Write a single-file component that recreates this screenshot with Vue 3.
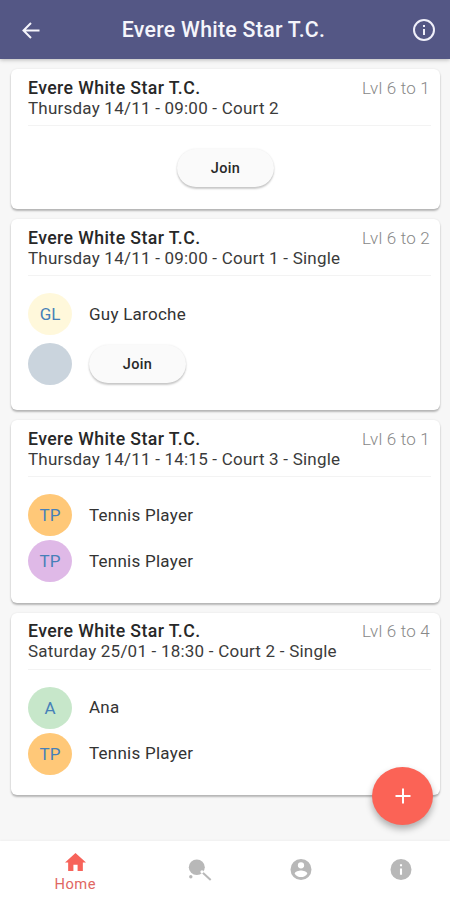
<script setup>
const club = 'Evere White Star T.C.'
const matches = [
  { when: 'Thursday 14/11 - 09:00 - Court 2', level: 'Lvl 6 to 1', size: 'short', players: [] },
  {
    when: 'Thursday 14/11 - 09:00 - Court 1 - Single', level: 'Lvl 6 to 2', size: 'tall',
    players: [{ initials: 'GL', name: 'Guy Laroche', tone: 'cream' }, { tone: 'empty' }]
  },
  {
    when: 'Thursday 14/11 - 14:15 - Court 3 - Single', level: 'Lvl 6 to 1', size: 'medium',
    players: [{ initials: 'TP', name: 'Tennis Player', tone: 'orange' }, { initials: 'TP', name: 'Tennis Player', tone: 'purple' }]
  },
  {
    when: 'Saturday 25/01 - 18:30 - Court 2 - Single', level: 'Lvl 6 to 4', size: 'medium',
    players: [{ initials: 'A', name: 'Ana', tone: 'green' }, { initials: 'TP', name: 'Tennis Player', tone: 'orange' }]
  }
]
</script>

<template>
  <div class="screen">
    <header class="bar">
      <svg class="back" viewBox="0 0 18 17"><path d="M17.5 8.5H1.5M9 1L1.5 8.5L9 16" /></svg>
      <h1>{{ club }}</h1>
      <svg class="about" viewBox="0 0 24 24"><path d="M11 7h2v2h-2zm0 4h2v6h-2zm1-10a11 11 0 1 0 0 22 11 11 0 0 0 0-22zm0 20a9 9 0 1 1 0-18 9 9 0 0 1 0 18z" /></svg>
    </header>

    <main class="list">
      <article v-for="(m, i) in matches" :key="i" class="card" :class="m.size">
        <div class="head">
          <div class="titles">
            <h2>{{ club }}</h2>
            <p class="when">{{ m.when }}</p>
          </div>
          <span class="level">{{ m.level }}</span>
        </div>
        <div v-if="m.players.length" class="players">
          <div v-for="(p, j) in m.players" :key="j" class="player" :class="{ open: !p.name }">
            <span class="avatar" :class="p.tone">{{ p.initials }}</span>
            <span v-if="p.name" class="name">{{ p.name }}</span>
            <button v-else class="join">Join</button>
          </div>
        </div>
        <div v-else class="vacant"><button class="join">Join</button></div>
      </article>
    </main>

    <button class="fab" aria-label="Add">
      <svg viewBox="0 0 16 16"><path d="M8 0.5V15.5M0.5 8H15.5" /></svg>
    </button>

    <nav class="tabs">
      <a class="tab active">
        <svg class="home" viewBox="2 3 20 17" preserveAspectRatio="none"><path d="M10 20v-6h4v6h5v-8h3L12 3 2 12h3v8z" /></svg>
        <span>Home</span>
      </a>
      <a class="tab">
        <svg class="racket" viewBox="0 0 24 23">
          <ellipse cx="8.8" cy="8.3" rx="8" ry="7.7" />
          <path class="handle" d="M14 13L22.7 21" />
          <circle class="gap" cx="14" cy="12.8" r="1.6" />
          <circle cx="2.8" cy="17.8" r="1.7" />
        </svg>
      </a>
      <a class="tab">
        <svg class="round" viewBox="2 2 20 20"><path d="M12 2a10 10 0 1 0 0 20 10 10 0 0 0 0-20zm0 3a3 3 0 1 1 0 6 3 3 0 0 1 0-6zm0 14.2a7.2 7.2 0 0 1-6-3.22c.03-1.99 4-3.08 6-3.08s5.97 1.09 6 3.08a7.2 7.2 0 0 1-6 3.22z" /></svg>
      </a>
      <a class="tab">
        <svg class="round" viewBox="2 2 20 20"><path d="M12 2a10 10 0 1 0 0 20 10 10 0 0 0 0-20zm1 15h-2v-6h2zm0-8h-2V7h2z" /></svg>
      </a>
    </nav>
  </div>
</template>

<style>
body { margin: 0; }
</style>

<style scoped>
* { box-sizing: border-box; }
.screen {
  position: relative;
  display: flex;
  flex-direction: column;
  width: 450px;
  height: 900px;
  overflow: hidden;
  background: #f7f7f7;
  font-family: Roboto, sans-serif;
  color: #282828;
}
.bar {
  display: flex;
  align-items: center;
  justify-content: space-between;
  flex: none;
  height: 59px;
  padding: 1px 14px 0 22px;
  background: #545785;
  box-shadow: 0 1px 4px rgba(0, 0, 0, 0.25);
}
.back { width: 18px; height: 17px; fill: none; stroke: #f5f5fb; stroke-width: 2; }
.about { width: 24px; height: 24px; margin-left: 5px; fill: #f0f0fa; }
h1 { margin: 0; font-size: 21.3px; font-weight: 500; line-height: 24px; letter-spacing: 0.28px; color: #f5f5fb; white-space: nowrap; }
.list { display: flex; flex-direction: column; gap: 10px; flex: 1; padding: 10px 10px 0 11px; }
.card {
  display: flex;
  flex-direction: column;
  flex: none;
  padding: 0 9px 0 17px;
  border-radius: 6px;
  background: #fff;
  box-shadow: 0 2px 2px rgba(0, 0, 0, 0.25), 0 0 2px rgba(0, 0, 0, 0.09);
}
.short { height: 140px; }
.tall { height: 191px; }
.medium { height: 182.5px; }
.head {
  display: flex;
  justify-content: space-between;
  flex: none;
  height: 57px;
  padding-top: 8.5px;
  padding-right: 1px;
  border-bottom: 1px solid #f3f3f3;
}
h2, .when { margin: 0; line-height: 20px; white-space: nowrap; }
h2 { font-size: 17.7px; font-weight: 500; letter-spacing: 0.4px; }
.when { font-size: 17px; letter-spacing: 0.22px; color: #3b3b3b; }
.level { font-size: 17px; font-weight: 300; line-height: 20px; letter-spacing: 0.2px; color: #888; }
.players { display: flex; flex-direction: column; gap: 4px; padding-top: 17px; }
.player { display: flex; align-items: center; gap: 17px; height: 42px; }
.player.open { margin-top: 4px; }
.avatar {
  display: flex;
  align-items: center;
  justify-content: center;
  width: 44px;
  height: 42px;
  border-radius: 50%;
  font-size: 17px;
  color: #4680b8;
}
.cream { background: #fff8db; }
.empty { background: #cad4dd; }
.orange { background: #ffc878; }
.purple { background: #dfb9e7; }
.green { background: #c7e7ca; }
.name { padding-bottom: 1px; font-size: 17px; letter-spacing: 0.25px; color: #333; }
.vacant { display: flex; justify-content: center; padding: 23px 8px 0 0; }
.join {
  width: 97px;
  height: 38px;
  padding: 0;
  border: 0;
  border-radius: 19px;
  background: #fafafa;
  box-shadow: 0 2px 2px rgba(0, 0, 0, 0.2), 0 0 2px rgba(0, 0, 0, 0.09);
  font-family: inherit;
  font-size: 14.5px;
  font-weight: 500;
  letter-spacing: 0.3px;
  color: #282828;
}
.fab {
  position: absolute;
  left: 372px;
  top: 767px;
  z-index: 1;
  display: grid;
  place-items: center;
  width: 61px;
  height: 58px;
  padding: 0;
  border: 0;
  border-radius: 50%;
  background: #fb6356;
  box-shadow: 0 4px 7px rgba(0, 0, 0, 0.3);
}
.fab svg { width: 16px; height: 16px; fill: none; stroke: #fff; stroke-width: 2; }
.tabs {
  display: flex;
  flex: none;
  height: 59px;
  padding: 0 0 0 19px;
  background: #fff;
  box-shadow: 0 -1px 2px rgba(0, 0, 0, 0.03);
}
.tab { display: flex; flex-direction: column; align-items: center; flex: none; width: 112.5px; padding-top: 12px; fill: #b8b8b8; }
.tab:nth-child(2) { width: 137px; padding-top: 18px; }
.tab:nth-child(3) { width: 64px; padding-top: 18px; }
.tab:nth-child(4) { width: 136px; padding-top: 18px; }
.active { fill: #f7635a; color: #df6662; }
.active span { font-size: 14.7px; line-height: 17px; margin-top: 5px; letter-spacing: 0.5px; }
.home { width: 21px; height: 18px; }
.round { width: 22px; height: 21px; }
.racket { width: 24px; height: 23px; }
.handle { fill: none; stroke: #b8b8b8; stroke-width: 2; }
.gap { fill: #fff; }
</style>
